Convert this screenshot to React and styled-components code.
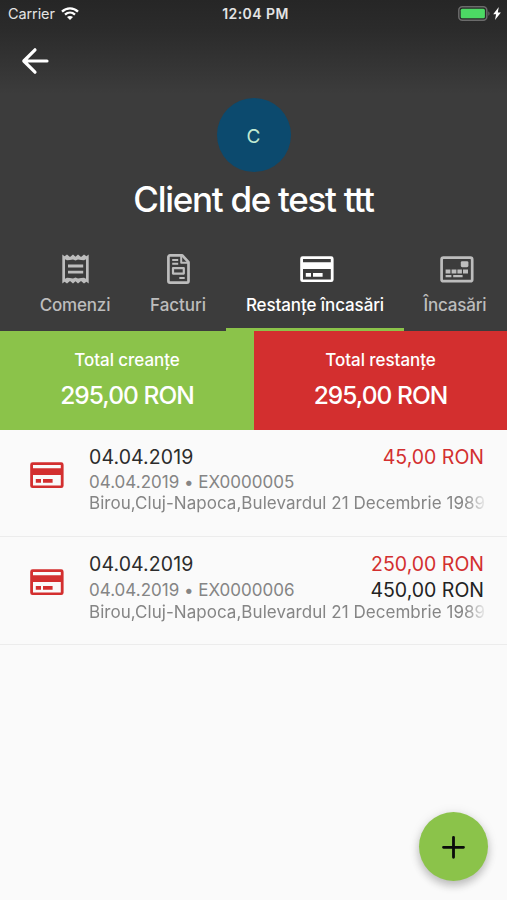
import React from 'react';
import styled, { createGlobalStyle } from 'styled-components';

const GlobalStyle = createGlobalStyle`
  * { box-sizing: border-box; }
  body {
    margin: 0;
    background: #fafafa;
    font-family: Inter, "Liberation Sans", sans-serif;
    font-feature-settings: "calt" 0;
  }
`;

const Screen = styled.main`
  width: 507px;
  height: 900px;
  position: relative;
  overflow: hidden;
  display: flex;
  flex-direction: column;
  background: #fafafa;
`;

const Header = styled.header`
  height: 331px;
  flex: none;
  display: flex;
  flex-direction: column;
  background: linear-gradient(#262626 0, #2b2b2b 30px, #3c3c3c 94px);
  color: #fff;
`;

const StatusBar = styled.div`
  height: 27px;
  padding: 0 6px 0 8px;
  display: grid;
  grid-template-columns: 1fr auto 1fr;
  align-items: center;
  color: #e4e4e4;
`;

const Carrier = styled.div`
  display: flex;
  align-items: center;
  gap: 6px;
  font-size: 14.5px;
  letter-spacing: -0.1px;
`;

const Clock = styled.div`
  padding-left: 2px;
  font-size: 14px;
  font-weight: 600;
  letter-spacing: 0.45px;
`;

const Power = styled.div`
  display: flex;
  justify-content: flex-end;
  align-items: center;
  gap: 3px;
`;

const Toolbar = styled.div`
  height: 67px;
  padding: 0 21px;
  display: flex;
  align-items: center;
`;

const BackButton = styled.button`
  border: 0;
  padding: 0;
  background: none;
  color: #fff;
  display: flex;
`;

const Profile = styled.section`
  padding-top: 4px;
  height: 144px;
  display: flex;
  flex-direction: column;
  align-items: center;
`;

const Avatar = styled.div`
  width: 74px;
  height: 74px;
  padding-top: 2px;
  border-radius: 50%;
  background: #0c4a6e;
  color: #c1ead3;
  display: flex;
  align-items: center;
  justify-content: center;
  font-size: 19px;
`;

const ClientName = styled.h1`
  margin: 5px 0 0;
  font-size: 35px;
  line-height: 44px;
  font-weight: 500;
  letter-spacing: -1.3px;
  white-space: nowrap;
`;

const Tabs = styled.nav`
  flex: 1;
  display: flex;
  padding-left: 20px;
`;

const Tab = styled.button`
  width: ${(p) => p.$width}px;
  flex: none;
  padding: 12px 0 0;
  border: 0;
  border-bottom: 3px solid ${(p) => (p.$active ? '#8bc34a' : 'transparent')};
  background: none;
  font-family: inherit;
  color: ${(p) => (p.$active ? '#fff' : '#bdbdbd')};
  display: flex;
  flex-direction: column;
  align-items: center;
`;

const TabIcon = styled.span`
  height: 38px;
  padding-left: ${(p) => p.$shift || 0}px;
  display: flex;
  align-items: center;
`;

const TabLabel = styled.span`
  margin-top: 5px;
  font-size: 17px;
  line-height: 24px;
  font-weight: 500;
  letter-spacing: ${(p) => p.$tracking || 0}px;
  white-space: nowrap;
`;

const Totals = styled.section`
  height: 99px;
  flex: none;
  display: grid;
  grid-template-columns: 254px 253px;
`;

const Total = styled.div`
  padding-top: 18px;
  background: ${(p) => p.$color};
  color: #fff;
  text-align: center;
`;

const TotalLabel = styled.div`
  font-size: 17px;
  line-height: 22px;
  font-weight: 500;
  letter-spacing: -0.05px;
`;

const TotalValue = styled.div`
  margin-top: 8px;
  font-size: 24.5px;
  line-height: 32px;
  font-weight: 500;
  letter-spacing: -0.95px;
`;

const List = styled.ul`
  margin: 0;
  padding: 0;
  list-style: none;
`;

const Row = styled.li`
  height: 107px;
  padding: 14px 23px 0 30px;
  border-bottom: 1px solid #ececec;
  display: flex;
  & + & { height: 108px; }
`;

const RowIcon = styled.div`
  width: 59px;
  padding-top: 18px;
  flex: none;
  color: #d32f2f;
`;

const RowBody = styled.div`
  flex: 1;
  min-width: 0;
`;

const Line = styled.div`
  display: flex;
  justify-content: space-between;
  align-items: center;
  white-space: nowrap;
  height: ${(p) => p.$height}px;
`;

const Date = styled.span`
  font-size: 19.5px;
  letter-spacing: 0.1px;
  color: #2c2c2c;
`;

const Amount = styled.span`
  font-size: 19.5px;
  color: ${(p) => (p.$due ? '#d32f2f' : '#222')};
`;

const Reference = styled.span`
  font-size: 17px;
  color: #858585;
`;

const Address = styled.div`
  height: 20px;
  margin: -1px -4px 0 0;
  line-height: 20px;
  font-size: 17px;
  letter-spacing: 0.045px;
  color: #858585;
  white-space: nowrap;
  overflow: hidden;
  mask-image: linear-gradient(to right, #000 calc(100% - 24px), transparent);
`;

const AddButton = styled.button`
  position: absolute;
  right: 19px;
  bottom: 19px;
  width: 69px;
  height: 69px;
  padding: 0;
  border: 0;
  border-radius: 50%;
  background: #8bc34a;
  box-shadow: 0 5px 8px rgba(0, 0, 0, 0.2), 0 1px 12px rgba(0, 0, 0, 0.1);
  display: flex;
  align-items: center;
  justify-content: center;
`;

const WifiIcon = () => (
  <svg width="18" height="13" viewBox="0 0 18 13" fill="none" stroke="#fff" strokeWidth="2.3">
    <path d="M1 4.6C5.5.2 12.5.2 17 4.6M4 7.6c2.9-2.7 7.1-2.7 10 0" />
    <path d="M6 10c1.7-1.5 4.3-1.5 6 0l-3 3z" fill="#fff" stroke="none" />
  </svg>
);

const BatteryIcon = () => (
  <svg width="32" height="15" viewBox="0 0 32 15">
    <rect x=".8" y=".8" width="28" height="13.4" rx="3.5" fill="none" stroke="#6b6b6b" strokeWidth="1.5" />
    <rect x="2.7" y="2.7" width="24.2" height="9.6" rx="1.5" fill="#4cd964" />
    <path d="M30.3 5.2c1.7.8 1.7 3.8 0 4.6z" fill="#6b6b6b" />
  </svg>
);

const BoltIcon = () => (
  <svg width="8" height="13" viewBox="0 0 8 13" fill="#fff">
    <path d="M5.8 0 .2 7.3h2.9L2 13 7.9 5.4H4.8z" />
  </svg>
);

const BackIcon = () => (
  <svg width="28" height="28" viewBox="0 0 28 28" fill="none" stroke="currentColor" strokeWidth="3.2" strokeLinecap="round" strokeLinejoin="round">
    <path d="M26 14H3M14 2.8 2.8 14 14 25.2" />
  </svg>
);

const ReceiptIcon = () => (
  <svg width="27" height="30" viewBox="0 0 27 30" fill="currentColor">
    <path
      fillRule="evenodd"
      d="M.3.5 2.6 2.2 5 .5 8 3 11 .5l2.5 2.2L16 .5 19 3l3-2.5 2.4 1.7L26.7.5v29l-2.3-1.7-2.4 1.7-3-2.5-3 2.5-2.5-2.2-2.5 2.2L8 27l-3 2.5-2.4-1.7L.3 29.5zM3 5.2v19.6l2-1 3 .2 3 .5 2.5-.9 2.5.9 3-.5 3-.2 2 1V5.2l-2 1L19 6l-3-.5-2.5.9-2.5-.9L8 6l-3 .2z"
    />
    <path d="M6 10.6h15.2v2.8H6zM6 16.7h15.2v2.8H6z" />
  </svg>
);

const InvoiceIcon = () => (
  <svg width="23" height="30" viewBox="0 0 23 30" fill="none" stroke="currentColor" strokeWidth="2.7" strokeLinejoin="round">
    <path d="M3 1.4h12.3l6.2 6.8V27a1.6 1.6 0 0 1-1.6 1.6H3A1.6 1.6 0 0 1 1.4 27V3A1.6 1.6 0 0 1 3 1.4z" />
    <path d="M14.2 2v6.8h7" strokeWidth="2" />
    <path d="M5.2 5.9h6M5.2 9.8h6M12.3 24h5.4" strokeWidth="2" />
    <path d="M6 14.2h10.8v5.4H6z" strokeWidth="2.2" />
  </svg>
);

const CardIcon = () => (
  <svg width="34" height="27" viewBox="0 0 34 27" fill="currentColor">
    <path fillRule="evenodd" d="M2.6.3h28.6A2.4 2.4 0 0 1 33.6 2.7v21a2.4 2.4 0 0 1-2.4 2.4H2.6A2.4 2.4 0 0 1 .2 23.7v-21A2.4 2.4 0 0 1 2.6.3zM3 3v3.3h27.8V3zM3 13v10.4h27.8V13z" />
    <path d="M5.8 17h5.2v3.8H5.8zM13 17h9.6v3.8H13z" />
  </svg>
);

const PaymentIcon = () => (
  <svg width="34" height="27" viewBox="0 0 34 27" fill="currentColor">
    <rect x="1.6" y="1.6" width="30.6" height="23.6" rx="1.8" fill="none" stroke="currentColor" strokeWidth="2.7" />
    <rect x="20.8" y="5.2" width="7.6" height="6" rx="1.4" />
    <path d="M5.6 13.4h4.8v4H5.6zM11.6 13.4h4.8v4h-4.8zM17.4 13.4h4.5v4h-4.5zM23 13.4h5v4h-5zM5.6 19h5.8v2.2H5.6zM13.2 19h9.4v2.2h-9.4z" />
  </svg>
);

const PlusIcon = () => (
  <svg width="24" height="24" viewBox="0 0 24 24" stroke="#0b0b0b" strokeWidth="2.8" strokeLinecap="round">
    <path d="M11.5 2.3v20M1.5 12.3h20" />
  </svg>
);

const TABS = [
  { label: 'Comenzi', width: 110, tracking: -0.2, Icon: ReceiptIcon },
  { label: 'Facturi', width: 96, tracking: -0.05, Icon: InvoiceIcon },
  { label: 'Restanțe încasări', width: 178, tracking: -0.1, Icon: CardIcon, active: true, shift: 4 },
  { label: 'Încasări', width: 102, tracking: -0.2, Icon: PaymentIcon, shift: 4 },
];

const ADDRESS = 'Birou,Cluj-Napoca,Bulevardul 21 Decembrie 1989';

const ROWS = [
  { date: '04.04.2019', due: '45,00 RON', reference: '04.04.2019 • EX0000005' },
  { date: '04.04.2019', due: '250,00 RON', total: '450,00 RON', reference: '04.04.2019 • EX0000006' },
];

export default function App() {
  return (
    <Screen>
      <GlobalStyle />
      <Header>
        <StatusBar>
          <Carrier>Carrier <WifiIcon /></Carrier>
          <Clock>12:04 PM</Clock>
          <Power><BatteryIcon /><BoltIcon /></Power>
        </StatusBar>
        <Toolbar>
          <BackButton aria-label="Înapoi"><BackIcon /></BackButton>
        </Toolbar>
        <Profile>
          <Avatar>C</Avatar>
          <ClientName>Client de test ttt</ClientName>
        </Profile>
        <Tabs>
          {TABS.map(({ label, width, tracking, Icon, active, shift }) => (
            <Tab key={label} $width={width} $active={active}>
              <TabIcon $shift={shift}><Icon /></TabIcon>
              <TabLabel $tracking={tracking}>{label}</TabLabel>
            </Tab>
          ))}
        </Tabs>
      </Header>
      <Totals>
        <Total $color="#8bc34a">
          <TotalLabel>Total creanțe</TotalLabel>
          <TotalValue>295,00 RON</TotalValue>
        </Total>
        <Total $color="#d32f2f">
          <TotalLabel>Total restanțe</TotalLabel>
          <TotalValue>295,00 RON</TotalValue>
        </Total>
      </Totals>
      <List>
        {ROWS.map((row) => (
          <Row key={row.reference}>
            <RowIcon><CardIcon /></RowIcon>
            <RowBody>
              <Line $height={26}>
                <Date>{row.date}</Date>
                <Amount $due>{row.due}</Amount>
              </Line>
              <Line $height={row.total ? 26 : 24}>
                <Reference>{row.reference}</Reference>
                {row.total && <Amount>{row.total}</Amount>}
              </Line>
              <Address>{ADDRESS}</Address>
            </RowBody>
          </Row>
        ))}
      </List>
      <AddButton aria-label="Adaugă"><PlusIcon /></AddButton>
    </Screen>
  );
}
